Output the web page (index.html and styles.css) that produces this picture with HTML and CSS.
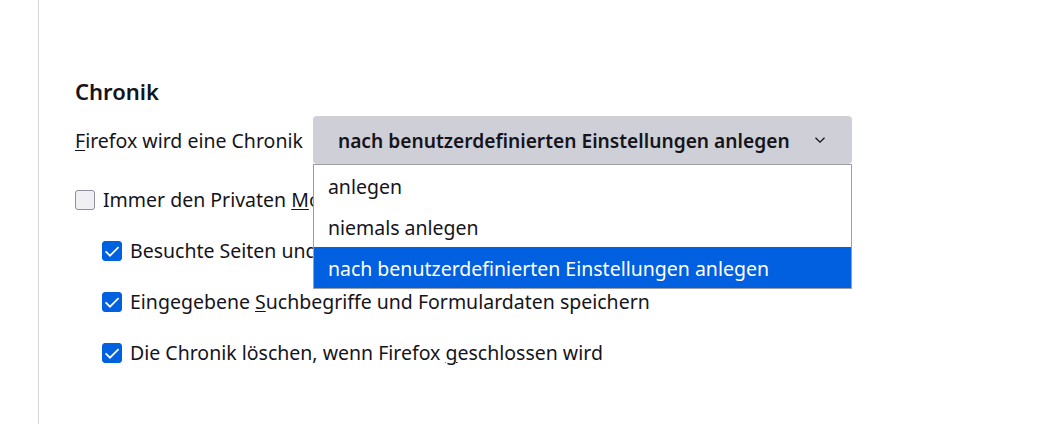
FILE: index.html
```html
<!DOCTYPE html>
<html lang="de">
<head>
<meta charset="utf-8">
<link rel="stylesheet" href="styles.css">
</head>
<body>
<div class="page">
  <div class="nav"></div>
  <main class="content">
    <h2 class="heading">Chronik</h2>
    <div class="history-row">
      <label class="label"><u>F</u>irefox wird eine Chronik</label>
      <div class="select-wrap">
        <div class="select">
          <span class="select-text">nach benutzerdefinierten Einstellungen anlegen</span>
          <svg class="chevron" width="12" height="8" viewBox="0 0 12 8"><path d="M1.5 1.8 L6 6.2 L10.5 1.8" fill="none" stroke="#15141a" stroke-width="1.3"/></svg>
        </div>
        <ul class="dropdown">
          <li class="option">anlegen</li>
          <li class="option">niemals anlegen</li>
          <li class="option selected">nach benutzerdefinierten Einstellungen anlegen</li>
        </ul>
      </div>
    </div>
    <div class="check-row">
      <span class="box"></span>
      <span class="check-label">Immer den Privaten <u>M</u>odus verwenden</span>
    </div>
    <div class="sub">
      <div class="check-row">
        <span class="box checked"><svg width="20" height="20" viewBox="0 0 20 20"><path d="M3.6 10.3 L8 14.7 L16.6 6.2" fill="none" stroke="#fff" stroke-width="1.7"/></svg></span>
        <span class="check-label">Besuchte Seiten und <u>D</u>ownloads speichern</span>
      </div>
      <div class="check-row">
        <span class="box checked"><svg width="20" height="20" viewBox="0 0 20 20"><path d="M3.6 10.3 L8 14.7 L16.6 6.2" fill="none" stroke="#fff" stroke-width="1.7"/></svg></span>
        <span class="check-label">Eingegebene <u>S</u>uchbegriffe und Formulardaten speichern</span>
      </div>
      <div class="check-row">
        <span class="box checked"><svg width="20" height="20" viewBox="0 0 20 20"><path d="M3.6 10.3 L8 14.7 L16.6 6.2" fill="none" stroke="#fff" stroke-width="1.7"/></svg></span>
        <span class="check-label">Die Chronik löschen, wenn Firefox <u>g</u>eschlossen wird</span>
      </div>
    </div>
  </main>
</div>
</body>
</html>
```
FILE: styles.css
```css
html, body {
  margin: 0;
  padding: 0;
  background: #fff;
}
body {
  font-family: "Noto Sans", "Open Sans", sans-serif;
  color: #15141a;
  font-size: 19.5px;
}
.page {
  display: flex;
  height: 424px;
  overflow: hidden;
}
.nav {
  width: 38px;
  flex: none;
  border-right: 1px solid #d7d7db;
}
.content {
  padding-left: 36px;
  padding-top: 76px;
  flex: 1;
}
.heading {
  margin: 0;
  font-size: 22px;
  font-weight: 600;
  line-height: 30px;
}
.history-row {
  display: flex;
  align-items: center;
  margin-top: 10px;
}
.label {
  margin-right: 10px;
}
u {
  text-decoration-thickness: 1px;
  text-underline-offset: 2px;
}
.select-wrap {
  position: relative;
}
.select {
  width: 539px;
  height: 48px;
  box-sizing: border-box;
  background: #cfcfd8;
  border-radius: 4px;
  display: flex;
  align-items: center;
  padding-left: 25px;
  padding-right: 26px;
  font-weight: 600;
  font-size: 19.2px;
}
.select-text {
  flex: 1;
}
.chevron {
  display: block;
}
.dropdown {
  position: absolute;
  left: 0;
  top: 48px;
  width: 539px;
  box-sizing: border-box;
  margin: 0;
  padding: 0;
  list-style: none;
  background: #fff;
  border: 1px solid #9e9ea6;
  z-index: 2;
}
.option {
  height: 41px;
  box-sizing: border-box;
  padding-top: 2px;
  line-height: 39px;
  padding-left: 14px;
}
.option.selected {
  background: #0060df;
  color: #fff;
}
.check-row {
  display: flex;
  align-items: center;
  height: 51px;
}
.history-row + .check-row {
  margin-top: 10px;
}
.box {
  width: 20px;
  height: 20px;
  box-sizing: border-box;
  border: 1px solid #8f8f9d;
  border-radius: 3px;
  background: #f0f0f4;
  margin-right: 8px;
  flex: none;
  display: flex;
}
.box.checked {
  background: #0061e0;
  border-color: #0061e0;
}
.box.checked svg {
  margin: -1px;
}
.sub {
  padding-left: 27px;
}
```
